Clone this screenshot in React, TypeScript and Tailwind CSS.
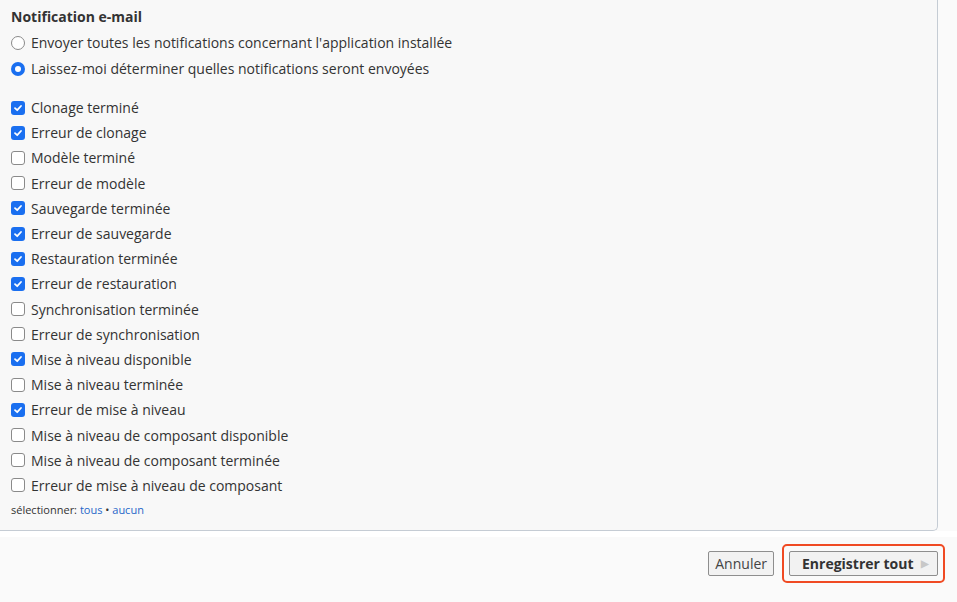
import React from "react";

const items: [string, boolean][] = [
  ["Clonage terminé", true],
  ["Erreur de clonage", true],
  ["Modèle terminé", false],
  ["Erreur de modèle", false],
  ["Sauvegarde terminée", true],
  ["Erreur de sauvegarde", true],
  ["Restauration terminée", true],
  ["Erreur de restauration", true],
  ["Synchronisation terminée", false],
  ["Erreur de synchronisation", false],
  ["Mise à niveau disponible", true],
  ["Mise à niveau terminée", false],
  ["Erreur de mise à niveau", true],
  ["Mise à niveau de composant disponible", false],
  ["Mise à niveau de composant terminée", false],
  ["Erreur de mise à niveau de composant", false],
];

function Box({ on }: { on: boolean }) {
  return on ? (
    <span className="w-[14px] h-[14px] rounded-[3px] bg-[#1a6ff0] flex items-center justify-center shrink-0">
      <svg width="10" height="10" viewBox="0 0 10 10">
        <path d="M2 5.2 L4.2 7.2 L8 3" fill="none" stroke="#fff" strokeWidth="1.8" strokeLinecap="round" strokeLinejoin="round" />
      </svg>
    </span>
  ) : (
    <span className="w-[14px] h-[14px] rounded-[3px] border border-[#8a8a8a] bg-white shrink-0" />
  );
}

function Radio({ on }: { on: boolean }) {
  return on ? (
    <span className="w-[14px] h-[14px] rounded-full bg-[#1a6ff0] flex items-center justify-center shrink-0">
      <span className="w-[6px] h-[6px] rounded-full bg-white" />
    </span>
  ) : (
    <span className="w-[14px] h-[14px] rounded-full border border-[#8a8a8a] bg-white shrink-0" />
  );
}

export default function App() {
  return (
    <div
      className="w-[957px] h-[602px] bg-[#fafafa] text-[#333] overflow-hidden"
      style={{ fontFamily: '"Open Sans", "Noto Sans", sans-serif' }}
    >
      <div className="w-[938px] h-[531px] bg-[#f8f8f8] border-r border-b border-[#c5ccd4] rounded-br-[5px] pl-[11px] pt-[7px]">
        <div className="text-[14px] font-bold leading-[20px] text-[#333]">Notification e-mail</div>
        <div className="mt-[6px] flex flex-col gap-[6px]">
          <label className="flex items-center gap-[6px] text-[14px] leading-[20px]">
            <Radio on={false} />
            <span>Envoyer toutes les notifications concernant l'application installée</span>
          </label>
          <label className="flex items-center gap-[6px] text-[14px] leading-[20px]">
            <Radio on={true} />
            <span>Laissez-moi déterminer quelles notifications seront envoyées</span>
          </label>
        </div>
        <div className="mt-[16px] flex flex-col">
          {items.map(([t, on]) => (
            <label key={t} className="flex items-center gap-[6px] text-[14px] h-[25.2px]">
              <Box on={on} />
              <span>{t}</span>
            </label>
          ))}
        </div>
        <div className="text-[11px] leading-[16px] mt-[4px] text-[#333]">
          sélectionner: <span className="text-[#1f67c9]">tous</span> • <span className="text-[#1f67c9]">aucun</span>
        </div>
      </div>
      <div className="h-[6px] bg-white w-[957px]" />
      <div className="flex justify-end items-center pr-[12px] pt-[7px] gap-[8px]">
        <button className="h-[25px] px-[6px] border border-[#8e8e8e] rounded-[2px] bg-[#f2f2f2] text-[14px] text-[#444]">
          Annuler
        </button>
        <div className="border-2 border-[#f04a23] rounded-[5px] p-[5px]">
          <button className="h-[25px] w-[149px] pl-[12px] pr-[8px] border border-[#8e8e8e] rounded-[2px] bg-[#f2f2f2] text-[14px] font-bold text-[#333] flex items-center justify-between">
            <span>Enregistrer tout</span>
            <span className="text-[10px] text-[#c8c8c8]">▶</span>
          </button>
        </div>
      </div>
    </div>
  );
}
